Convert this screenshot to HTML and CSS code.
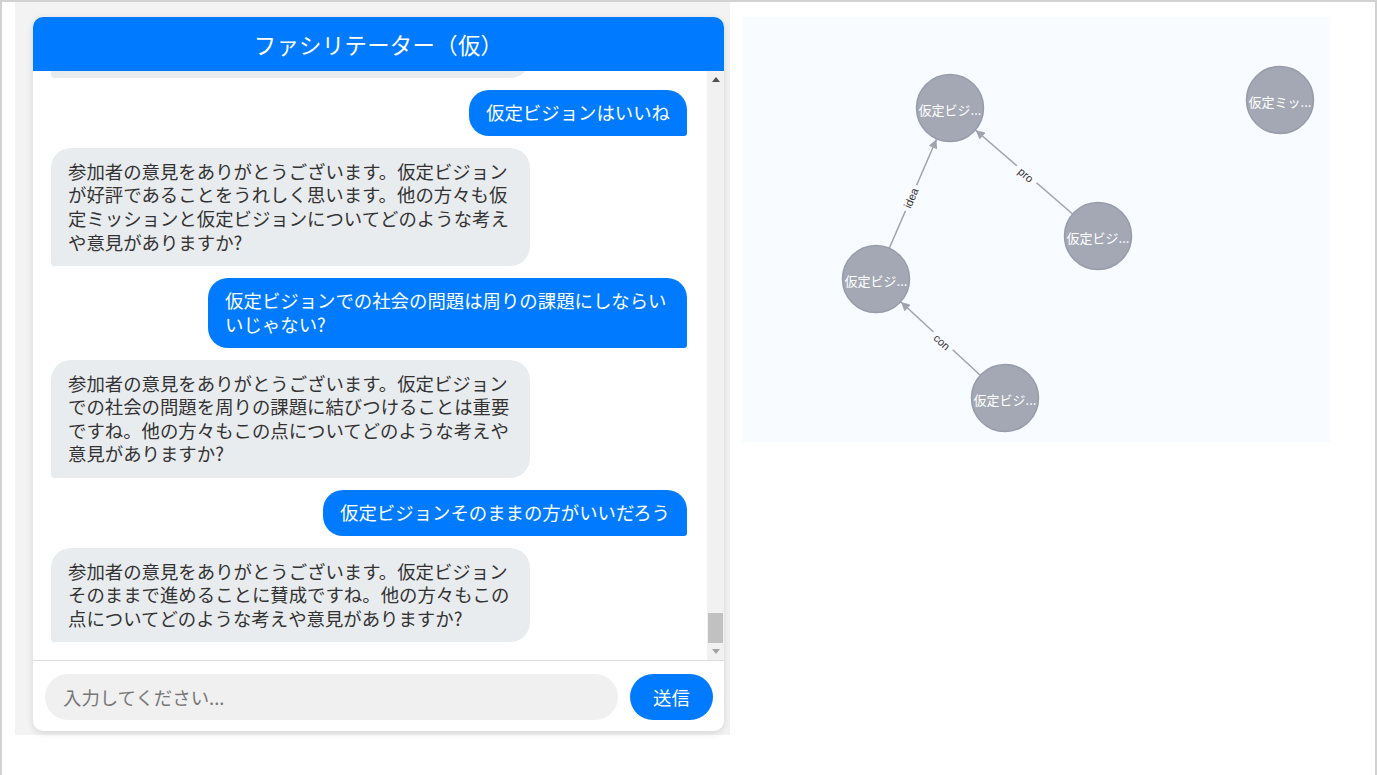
FILE: index.html
```html
<!DOCTYPE html>
<html lang="ja">
<head>
<meta charset="utf-8">
<title>ファシリテーター（仮）</title>
<link rel="stylesheet" href="styles.css">
</head>
<body>
<div class="frame">
  <div class="layout">
    <section class="chat-panel">
      <div class="chat-card">
        <header class="chat-header">ファシリテーター（仮）</header>
        <div class="messages-wrap">
          <div class="messages" id="messages">
            <div class="msg bot">参加者の意見をありがとうございます。仮定ミッションをより具体的な表現にすることで、伝わりやすくなりますね。他の方々もこの点についてどのような考えや意見がありますか?</div>
            <div class="msg user">仮定ビジョンはいいね</div>
            <div class="msg bot">参加者の意見をありがとうございます。仮定ビジョンが好評であることをうれしく思います。他の方々も仮定ミッションと仮定ビジョンについてどのような考えや意見がありますか?</div>
            <div class="msg user">仮定ビジョンでの社会の問題は周りの課題にしならいいじゃない?</div>
            <div class="msg bot">参加者の意見をありがとうございます。仮定ビジョンでの社会の問題を周りの課題に結びつけることは重要ですね。他の方々もこの点についてどのような考えや意見がありますか?</div>
            <div class="msg user">仮定ビジョンそのままの方がいいだろう</div>
            <div class="msg bot">参加者の意見をありがとうございます。仮定ビジョンそのままで進めることに賛成ですね。他の方々もこの点についてどのような考えや意見がありますか?</div>
          </div>
          <div class="scrollbar" aria-hidden="true">
            <div class="sb-btn"><span class="sb-arrow up"></span></div>
            <div class="sb-track"><div class="sb-thumb"></div></div>
            <div class="sb-btn"><span class="sb-arrow down"></span></div>
          </div>
        </div>
        <form class="composer" onsubmit="return false;">
          <input class="composer-input" type="text" placeholder="入力してください...">
          <button class="send-btn" type="submit">送信</button>
        </form>
      </div>
    </section>
    <section class="graph-panel">
      <svg class="graph" width="588" height="425" viewBox="0 0 588 425">
        <defs>
          <marker id="arrow" viewBox="0 0 10 10" refX="10" refY="5" markerWidth="10" markerHeight="9" markerUnits="userSpaceOnUse" orient="auto">
            <path d="M0,0 L10,5 L0,10 Z" fill="#9ea3ae"/>
          </marker>
        </defs>
        <g class="edges">
          <line x1="147.5" y1="230.8" x2="194.5" y2="122.2" marker-end="url(#arrow)"/>
          <line x1="330.3" y1="196.8" x2="233.7" y2="113.2" marker-end="url(#arrow)"/>
          <line x1="238" y1="358" x2="159" y2="285" marker-end="url(#arrow)"/>
        </g>
        <g class="edge-label" transform="translate(169,181) rotate(-66.6)">
          <rect x="-14" y="-7" width="28" height="14"/>
          <text>idea</text>
        </g>
        <g class="edge-label" transform="translate(284,158) rotate(40.9)">
          <rect x="-13" y="-7" width="26" height="14"/>
          <text>pro</text>
        </g>
        <g class="edge-label" transform="translate(200,325) rotate(42.7)">
          <rect x="-13" y="-7" width="26" height="14"/>
          <text>con</text>
        </g>
        <g class="node"><circle cx="208" cy="91" r="33.5"/><text x="208" y="92">仮定ビジ...</text></g>
        <g class="node"><circle cx="356" cy="219" r="33.5"/><text x="356" y="220">仮定ビジ...</text></g>
        <g class="node"><circle cx="134" cy="262" r="33.5"/><text x="134" y="263">仮定ビジ...</text></g>
        <g class="node"><circle cx="263" cy="381" r="33.5"/><text x="263" y="382">仮定ビジ...</text></g>
        <g class="node"><circle cx="538" cy="83" r="33.5"/><text x="538" y="84">仮定ミッ...</text></g>
      </svg>
    </section>
  </div>
</div>
<script src="script.js"></script>
</body>
</html>
```

FILE: styles.css
```css
html, body {
  margin: 0;
  padding: 0;
  background: #fff;
  font-family: "Noto Sans CJK JP", "Noto Sans", sans-serif;
}

.frame {
  border: 2px solid #d2d2d2;
  border-bottom: none;
  min-height: 800px;
  box-sizing: border-box;
}

.layout {
  display: flex;
  align-items: flex-start;
  gap: 12px;
  padding-left: 13px;
}

.chat-panel {
  width: 715px;
  background: #f3f3f3;
  padding: 15px 6px 4px 18px;
  box-sizing: border-box;
}

.chat-card {
  height: 714px;
  background: #fff;
  border-radius: 10px;
  box-shadow: 0 2px 7px rgba(0, 0, 0, 0.13);
  overflow: hidden;
  display: flex;
  flex-direction: column;
}

.chat-header {
  flex: none;
  height: 54px;
  background: #007bff;
  color: #fff;
  font-size: 22.4px;
  display: flex;
  align-items: center;
  justify-content: center;
  letter-spacing: 0.3px;
}

.messages-wrap {
  flex: 1;
  min-height: 0;
  display: flex;
}

.messages {
  flex: 1;
  min-width: 0;
  overflow-y: auto;
  scrollbar-width: none;
  padding: 17px 20px 18px 18px;
  display: flex;
  flex-direction: column;
  gap: 12px;
}

.messages::-webkit-scrollbar {
  display: none;
}

.scrollbar {
  flex: none;
  width: 17px;
  background: #f1f1f1;
  display: flex;
  flex-direction: column;
}

.sb-btn {
  flex: none;
  height: 17px;
  display: flex;
  align-items: center;
  justify-content: center;
}

.sb-arrow {
  width: 0;
  height: 0;
  border-left: 4.5px solid transparent;
  border-right: 4.5px solid transparent;
}

.sb-arrow.up {
  border-bottom: 5px solid #505050;
}

.sb-arrow.down {
  border-top: 5px solid #a3a3a3;
}

.sb-track {
  flex: 1;
  display: flex;
  flex-direction: column;
  justify-content: flex-end;
}

.sb-thumb {
  height: 30px;
  margin: 0 1px 0 1px;
  background: #c1c1c1;
}

.msg {
  flex: none;
  max-width: 75.3%;
  box-sizing: border-box;
  padding: 11.5px 17px;
  font-size: 18.4px;
  line-height: 1.285;
  word-break: break-all;
}

.msg.user {
  align-self: flex-end;
  background: #007bff;
  color: #fff;
  border-radius: 20px 20px 3px 20px;
}

.msg.bot {
  align-self: flex-start;
  background: #e9ecef;
  color: #333;
  border-radius: 20px 20px 20px 3px;
}

.composer {
  flex: none;
  margin: 0;
  border-top: 1px solid #ddd;
  padding: 13px 11px 11px 12px;
  display: flex;
  gap: 12px;
}

.composer-input {
  flex: 1;
  height: 46px;
  border: none;
  outline: none;
  border-radius: 23px;
  background: #f0f0f0;
  padding: 0 18px;
  font-family: inherit;
  font-size: 18.4px;
  color: #333;
}

.composer-input::placeholder {
  color: #777;
}

.send-btn {
  flex: none;
  width: 83px;
  height: 46px;
  border: none;
  border-radius: 23px;
  background: #007bff;
  color: #fff;
  font-family: inherit;
  font-size: 18.4px;
  cursor: pointer;
}

.graph-panel {
  margin-top: 15px;
  width: 588px;
  height: 425px;
  background: #f8fbff;
}

.graph {
  display: block;
}

.edges line {
  stroke: #9ea3ae;
  stroke-width: 1.5;
}

.edge-label rect {
  fill: #f8fbff;
}

.edge-label text {
  font-family: "Liberation Sans", Arial, sans-serif;
  font-size: 11px;
  fill: #333;
  text-anchor: middle;
  dominant-baseline: central;
}

.node circle {
  fill: #a3a8b4;
  stroke: #979cab;
  stroke-width: 1.5;
}

.node text {
  font-family: "Noto Sans CJK JP", "Noto Sans", sans-serif;
  font-size: 13px;
  fill: #fff;
  text-anchor: middle;
  dominant-baseline: central;
}
```

FILE: script.js
```javascript
(function () {
  var list = document.getElementById('messages');
  list.scrollTop = list.scrollHeight;
})();
```
